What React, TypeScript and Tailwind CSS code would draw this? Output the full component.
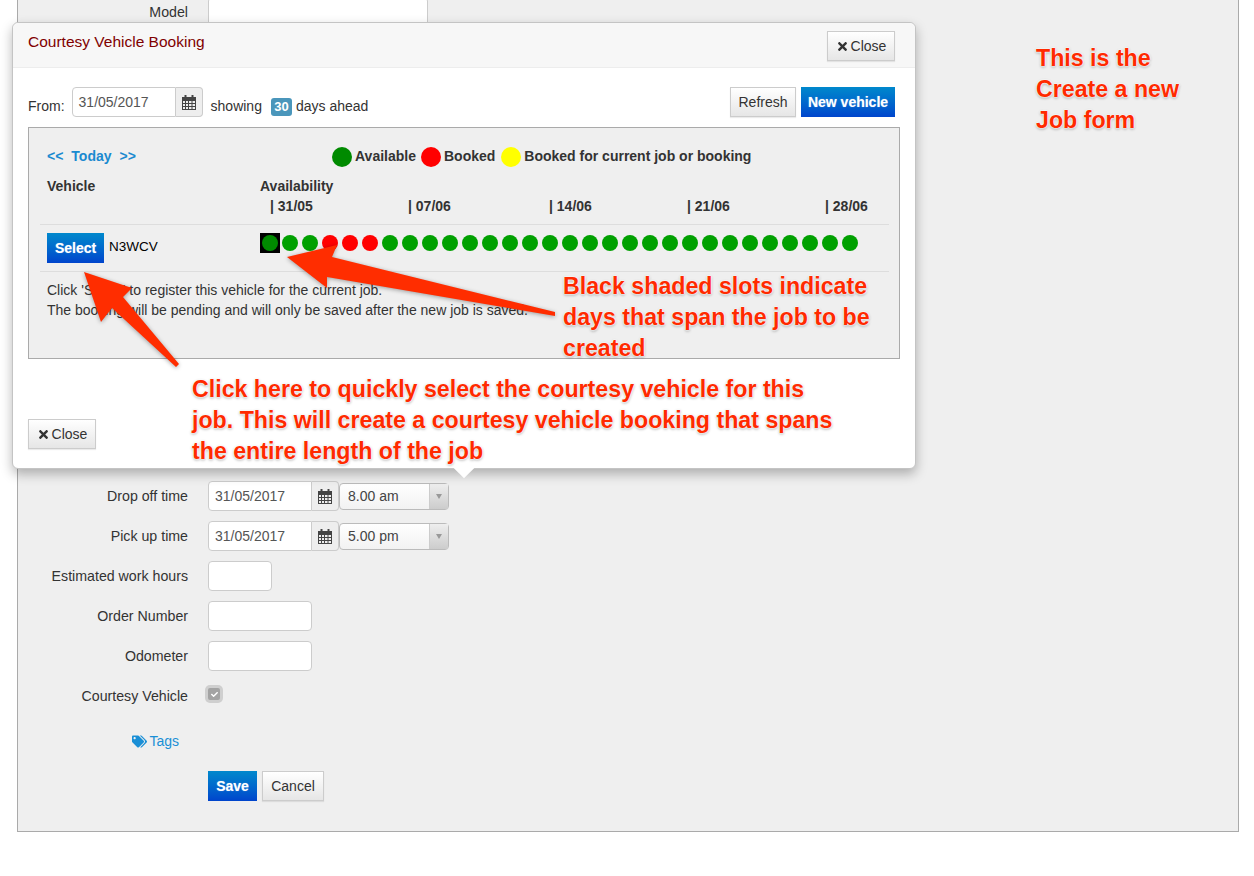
import { FaCheck, FaTags, FaTimes } from "react-icons/fa";

const CalendarIcon = () => (
  <svg width="14" height="15" viewBox="0 0 14 15" className="text-[#444]" fill="none" stroke="currentColor">
    <rect x="0.5" y="2.5" width="13" height="12" strokeWidth="1" />
    <rect x="0.5" y="2.5" width="13" height="3" fill="currentColor" strokeWidth="1" />
    <path d="M0.5 8.5H13.5M0.5 11.5H13.5M3.5 5.5V14.5M6.5 5.5V14.5M10 5.5V14.5" strokeWidth="1" />
    <path d="M3.5 0.5V4M10.5 0.5V4" strokeWidth="2" strokeLinecap="round" />
  </svg>
);

const DateInput = ({ value }: { value: string }) => (
  <div className="flex h-[30px] text-[#555]">
    <div className="flex w-[104px] items-center rounded-l-[4px] border border-[#ccc] bg-white pl-[6px]">{value}</div>
    <div className="flex w-[27px] items-center justify-center rounded-r-[4px] border border-l-0 border-[#ccc] bg-[#eeeeee]">
      <CalendarIcon />
    </div>
  </div>
);

const TimeSelect = ({ value }: { value: string }) => (
  <div className="flex h-[27px] w-[110px] rounded-[4px] border border-[#bbb] bg-gradient-to-b from-white to-[#f2f2f2] text-[#444]">
    <div className="flex flex-1 items-center pl-2">{value}</div>
    <div className="flex w-[19px] items-center justify-center border-l border-[#ccc] bg-gradient-to-b from-[#eee] to-[#ccc]">
      <span className="mt-px h-0 w-0 border-x-[3px] border-t-[5px] border-x-transparent border-t-[#999]" />
    </div>
  </div>
);

const FormRow = ({ label, children }: { label: string; children?: React.ReactNode }) => (
  <div className="flex h-10 items-center">
    <div className="w-[170px] text-right text-[14.2px] leading-[20px]">{label}</div>
    <div className="ml-5 flex items-center">{children}</div>
  </div>
);

const TextBox = ({ width }: { width: string }) => (
  <div className={`${width} h-[30px] rounded-[4px] border border-[#ccc] bg-white`} />
);

const GreyButton = ({ children, className = "" }: { children: React.ReactNode; className?: string }) => (
  <div
    className={`flex h-[30px] items-center justify-center border border-[#ccc] bg-gradient-to-b from-white to-[#e6e6e6] text-[#333] shadow-[0_1px_1px_rgba(0,0,0,0.08)] ${className}`}
  >
    {children}
  </div>
);

const BlueButton = ({ children, className = "" }: { children: React.ReactNode; className?: string }) => (
  <div
    className={`flex h-[30px] items-center justify-center bg-gradient-to-b from-[#0088cc] to-[#0044cc] font-bold text-white [text-shadow:0_0_1px_rgba(255,255,255,0.5)] ${className}`}
  >
    {children}
  </div>
);

const CloseButton = ({ className = "" }: { className?: string }) => (
  <GreyButton className={`w-[68px] ${className}`}>
    <FaTimes className="mr-[2px] text-[13px] text-[#333]" />
    Close
  </GreyButton>
);

const LegendDot = ({ color }: { color: string }) => <span className={`h-5 w-5 rounded-full ${color}`} />;

const redDays = [3, 4, 5];
const days = Array.from({ length: 30 }, (_, i) => i);

const Annotation = ({ className, lines }: { className: string; lines: string[] }) => (
  <div
    className={`absolute whitespace-nowrap text-[23.2px] leading-[31px] font-bold text-[#ff2a00] [text-shadow:0_0_2px_#fff,0_0_2px_#fff,0_0_2px_#fff,0_1px_3px_rgba(0,0,0,0.45)] ${className}`}
  >
    {lines.map((line) => (
      <div key={line}>{line}</div>
    ))}
  </div>
);

export default function App() {
  return (
    <div className="relative h-[876px] w-[1254px] overflow-hidden bg-white text-[14px] text-[#333] [font-family:'Liberation_Sans',Arial,sans-serif]">
      <div className="relative ml-[17px] flow-root h-[832px] w-[1222px] border-x border-b border-[#aaa] bg-[#efefef]">
        <div className="-mt-2">
          <FormRow label="Model">
            <TextBox width="w-[220px]" />
          </FormRow>
          <div className="h-[444px]" />
          <FormRow label="Drop off time">
            <DateInput value="31/05/2017" />
            <TimeSelect value="8.00 am" />
          </FormRow>
          <FormRow label="Pick up time">
            <DateInput value="31/05/2017" />
            <TimeSelect value="5.00 pm" />
          </FormRow>
          <FormRow label="Estimated work hours">
            <TextBox width="w-16" />
          </FormRow>
          <FormRow label="Order Number">
            <TextBox width="w-[104px]" />
          </FormRow>
          <FormRow label="Odometer">
            <TextBox width="w-[104px]" />
          </FormRow>
          <FormRow label="Courtesy Vehicle">
            <div className="-mt-[4px] -ml-[3px] flex h-[18px] w-[18px] items-center justify-center rounded-[5px] bg-[#cfcfcf]">
              <div className="flex h-3 w-3 items-center justify-center rounded-[2px] bg-[#a3a3a3]">
                <FaCheck className="text-[7px] text-white" />
              </div>
            </div>
          </FormRow>
          <div className="mt-[5px] flex h-10 w-[161px] items-center justify-end gap-[2px] text-[#1a8fd6]">
            <FaTags className="text-[15px]" />
            Tags
          </div>
          <div className="mt-[10px] ml-[190px] flex gap-[5px]">
            <BlueButton className="w-[49px]">Save</BlueButton>
            <GreyButton className="w-[62px]">Cancel</GreyButton>
          </div>
        </div>

        <div className="absolute top-[22px] -left-[6px] h-[447px] w-[904px] rounded-[6px] border border-[#c4c4c4] bg-white shadow-[0_5px_12px_rgba(0,0,0,0.28)]">
          <div className="flex h-[45px] justify-between rounded-t-[6px] border-b border-[#ededed] bg-[#f7f7f7] pt-2 pr-5 pl-[15px]">
            <div className="-mt-[1px] text-[15.5px] text-[#800000]">Courtesy Vehicle Booking</div>
            <CloseButton />
          </div>

          <div className="mt-[19px] flex items-start justify-between pr-5 pl-[15px]">
            <div className="flex items-center">
              <span className="mt-[8px]">From:</span>
              <div className="ml-[7px]">
                <DateInput value="31/05/2017" />
              </div>
              <span className="mt-[8px] ml-[8px]">showing</span>
              <span className="mt-[9px] ml-[9px] flex h-[18px] w-[21px] items-center justify-center rounded-[3px] bg-[#4a96bb] text-[13px] font-bold text-white">
                30
              </span>
              <span className="mt-[8px] ml-1">days ahead</span>
            </div>
            <div className="flex gap-[5px]">
              <GreyButton className="w-[66px]">Refresh</GreyButton>
              <BlueButton className="w-[94px]">New vehicle</BlueButton>
            </div>
          </div>

          <div className="mt-[10px] ml-[15px] h-[232px] w-[872px] border border-[#aaa] bg-[#efefef] pl-[11px]">
            <div className="w-[849px]">
              <div className="flex h-[40px] items-end pb-[1px] font-bold">
                <div className="flex w-[292px] gap-[8px] pl-[7px] text-[#1a8ad0]">
                  <span>&lt;&lt;</span>
                  <span>Today</span>
                  <span>&gt;&gt;</span>
                </div>
                <div className="flex items-center">
                  <LegendDot color="bg-[#008a00]" />
                  <span className="ml-[3px]">Available</span>
                  <span className="ml-[5px] flex">
                    <LegendDot color="bg-[#ff0000]" />
                  </span>
                  <span className="ml-[3px]">Booked</span>
                  <span className="ml-[6px] flex">
                    <LegendDot color="bg-[#ffff00]" />
                  </span>
                  <span className="ml-[3px]">Booked for current job or booking</span>
                </div>
              </div>
              <div className="mt-[8px] flex h-5 items-center font-bold">
                <div className="w-[220px] pl-[7px]">Vehicle</div>
                <div>Availability</div>
              </div>
              <div className="flex h-5 items-center pl-[230px] font-bold">
                <span className="w-[138px]">| 31/05</span>
                <span className="w-[141px]">| 07/06</span>
                <span className="w-[138px]">| 14/06</span>
                <span className="w-[138px]">| 21/06</span>
                <span>| 28/06</span>
              </div>
              <div className="mt-[8px] flex h-[48px] border-y border-[#ddd]">
                <div className="flex w-[220px] pt-2 pl-[7px]">
                  <BlueButton className="w-[57px]">Select</BlueButton>
                  <span className="mt-[4px] ml-[5px] text-[13.5px] text-black">N3WCV</span>
                </div>
                <div className="flex items-start pt-2">
                  {days.map((day) => (
                    <div
                      key={day}
                      className={`flex h-5 w-5 items-center justify-center ${day === 0 ? "bg-black" : ""}`}
                    >
                      <span
                        className={`h-4 w-4 rounded-full ${
                          day === 0 ? "bg-[#008a00]" : redDays.includes(day) ? "bg-[#ff0000]" : "bg-[#00a000]"
                        }`}
                      />
                    </div>
                  ))}
                </div>
              </div>
              <div className="mt-2 pl-[7px] leading-5">
                <div>Click 'Select' to register this vehicle for the current job.</div>
                <div>The booking will be pending and will only be saved after the new job is saved.</div>
              </div>
            </div>
          </div>

          <CloseButton className="mt-[60px] ml-[15px]" />
          <div className="absolute -bottom-[7px] left-[443px] h-4 w-4 rotate-45 bg-white" />
        </div>
      </div>

      <svg className="pointer-events-none absolute top-0 left-0 h-[876px] w-[1254px] drop-shadow-[0_1px_2px_rgba(0,0,0,0.35)]">
        <polygon points="84,272 132,288 123,297 179,364 176,367 112,308 101,322" fill="#ff2d00" />
        <polygon points="287,257 337,245 332,257 555,312 555,316 327,277 327,288" fill="#ff2d00" />
      </svg>

      <Annotation className="top-[43px] left-[1036px]" lines={["This is the", "Create a new", "Job form"]} />
      <Annotation
        className="top-[271px] left-[563px]"
        lines={["Black shaded slots indicate", "days that span the job to be", "created"]}
      />
      <Annotation
        className="top-[374px] left-[192px]"
        lines={[
          "Click here to quickly select the courtesy vehicle for this",
          "job. This will create a courtesy vehicle booking that spans",
          "the entire length of the job",
        ]}
      />
    </div>
  );
}
